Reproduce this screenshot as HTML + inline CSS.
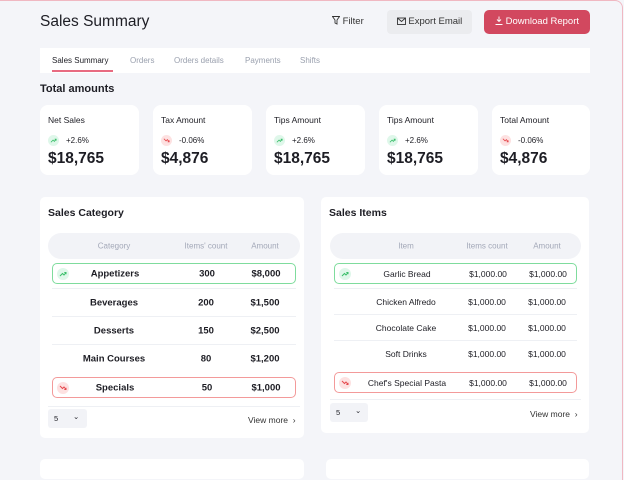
<!DOCTYPE html>
<html><head><style>
*{box-sizing:border-box;margin:0;padding:0}
body{width:624px;height:465px;overflow:hidden;background:#f4f5f9;font-family:"Liberation Sans",sans-serif;color:#1d1d24}
.frame{position:absolute;left:0;top:0;width:623px;height:480px;background:#f4f5f9;border-top:1px solid #f0b8c2;border-right:1px solid #f0b8c2;border-top-right-radius:8px}
.a{position:absolute}
.card{position:absolute;background:#fff;border-radius:8px}
.lbl{font-size:8.5px;position:absolute;left:8px;top:10px}
.badge{position:absolute;left:8px;top:30px;width:11px;height:11px;border-radius:50%}
.g{background:#dff7ea}.r{background:#fde1e1}
.badge svg,.ic svg{position:absolute;left:2px;top:2px}
.pct{position:absolute;left:26px;top:31px;font-size:8px}
.val{position:absolute;left:8px;top:45px;font-size:15.5px;font-weight:bold}
.hdr{position:absolute;height:26px;background:#f2f3f7;border-radius:13px;font-size:8px;color:#a3a8b8}
.hdr span,.row span{position:absolute;top:50%;transform:translate(-50%,-50%);white-space:nowrap}
.row{position:absolute;height:21px;font-size:8.5px}
.row.bl{font-weight:bold;font-size:9.5px}
.gb{border:1px solid #7fdc9d;border-radius:5px}
.rb{border:1px solid #f39a9a;border-radius:5px}
.sep{position:absolute;height:1px;background:#eef0f4}
.ic{position:absolute;left:4px;top:50%;transform:translateY(-50%);width:12px;height:12px;border-radius:50%}
.sel{position:absolute;background:#f2f3f7;border-radius:3px;font-size:7.5px}
.vm{position:absolute;font-size:8.5px;color:#333}
</style></head><body><div class="frame"></div>
<div class="a" style="left:40px;top:13px;font-size:15.5px">Sales Summary</div>
<div class="a" style="left:332px;top:16px;font-size:9.5px;color:#333"><svg width="8" height="9" viewBox="0 0 8 9" style="vertical-align:-1px"><path d="M0.5 0.5h7L5 4v4L3 7V4z" fill="none" stroke="#333" stroke-width="0.9"/></svg> Filter</div>
<div class="a" style="left:387px;top:10px;width:85px;height:24px;background:#ebecef;border-radius:4px;font-size:9.5px;color:#333;text-align:center;line-height:24px"><svg width="9" height="8" viewBox="0 0 9 8" style="vertical-align:-1px"><rect x="0.5" y="1" width="8" height="6.5" fill="none" stroke="#333" stroke-width="0.9"/><path d="M0.5 1L4.5 4.5L8.5 1" fill="none" stroke="#333" stroke-width="0.9"/></svg> Export Email</div>
<div class="a" style="left:484px;top:10px;width:106px;height:24px;background:#d2485f;border-radius:5px;font-size:9.5px;color:#fff;text-align:center;line-height:24px"><svg width="8" height="9" viewBox="0 0 8 9" style="vertical-align:-1px"><path d="M4 0.5v5M2 3.5l2 2 2-2M0.5 8.5h7" fill="none" stroke="#fff" stroke-width="0.9"/></svg> Download Report</div>
<div class="a" style="left:40px;top:48px;width:550px;height:25px;background:#fff;font-size:8px;color:#9aa0ae">
<span class="a" style="left:12px;top:8px;color:#1d1d24">Sales Summary</span>
<span class="a" style="left:12px;top:22px;width:61px;height:2px;background:#e86b81"></span>
<span class="a" style="left:90px;top:8px">Orders</span>
<span class="a" style="left:134px;top:8px">Orders details</span>
<span class="a" style="left:205px;top:8px">Payments</span>
<span class="a" style="left:260px;top:8px">Shifts</span></div>
<div class="a" style="left:40px;top:83px;font-size:11px;font-weight:bold">Total amounts</div>

<svg width="0" height="0" style="position:absolute"><defs>
<symbol id="up" viewBox="0 0 8 8"><path d="M1 6L3.5 3.5L5 5L7 2.5M5.3 2.5H7V4.2" fill="none" stroke="#3bbf6a" stroke-width="1"/></symbol>
<symbol id="dn" viewBox="0 0 8 8"><path d="M1 2L3.5 4.5L5 3L7 5.5M5.3 5.5H7V3.8" fill="none" stroke="#e5484d" stroke-width="1"/></symbol>
</defs></svg>

<div class="card" style="left:40px;top:105px;width:99px;height:70px"><div class="lbl">Net Sales</div><div class="badge g"><svg width="7" height="7"><use href="#up"/></svg></div><div class="pct">+2.6%</div><div class="val">$18,765</div></div>
<div class="card" style="left:153px;top:105px;width:99px;height:70px"><div class="lbl">Tax Amount</div><div class="badge r"><svg width="7" height="7"><use href="#dn"/></svg></div><div class="pct">-0.06%</div><div class="val">$4,876</div></div>
<div class="card" style="left:266px;top:105px;width:99px;height:70px"><div class="lbl">Tips Amount</div><div class="badge g"><svg width="7" height="7"><use href="#up"/></svg></div><div class="pct">+2.6%</div><div class="val">$18,765</div></div>
<div class="card" style="left:379px;top:105px;width:99px;height:70px"><div class="lbl">Tips Amount</div><div class="badge g"><svg width="7" height="7"><use href="#up"/></svg></div><div class="pct">+2.6%</div><div class="val">$18,765</div></div>
<div class="card" style="left:492px;top:105px;width:98px;height:70px"><div class="lbl">Total Amount</div><div class="badge r"><svg width="7" height="7"><use href="#dn"/></svg></div><div class="pct">-0.06%</div><div class="val">$4,876</div></div>

<div class="card" style="left:40px;top:197px;width:264px;height:241px;border-radius:5px">
<div class="a" style="left:8px;top:10px;font-size:10.5px;font-weight:bold">Sales Category</div>
<div class="hdr" style="left:8px;top:36px;width:252px"><span style="left:66px">Category</span><span style="left:158px">Items' count</span><span style="left:217px">Amount</span></div>
<div class="row bl gb" style="left:12px;top:66px;width:244px"><div class="ic g"><svg width="8" height="8"><use href="#up"/></svg></div><span style="left:62px">Appetizers</span><span style="left:154px">300</span><span style="left:213px">$8,000</span></div>
<div class="sep" style="left:12px;top:91px;width:244px"></div>
<div class="row bl" style="left:12px;top:95px;width:244px"><span style="left:62px">Beverages</span><span style="left:154px">200</span><span style="left:213px">$1,500</span></div>
<div class="sep" style="left:12px;top:119px;width:244px"></div>
<div class="row bl" style="left:12px;top:123px;width:244px"><span style="left:62px">Desserts</span><span style="left:154px">150</span><span style="left:213px">$2,500</span></div>
<div class="sep" style="left:12px;top:147px;width:244px"></div>
<div class="row bl" style="left:12px;top:151px;width:244px"><span style="left:62px">Main Courses</span><span style="left:154px">80</span><span style="left:213px">$1,200</span></div>
<div class="row bl rb" style="left:12px;top:180px;width:244px"><div class="ic r"><svg width="8" height="8"><use href="#dn"/></svg></div><span style="left:62px">Specials</span><span style="left:154px">50</span><span style="left:213px">$1,000</span></div>
<div class="sep" style="left:8px;top:209px;width:252px"></div>
<div class="sel" style="left:8px;top:212px;width:39px;height:19px"><span class="a" style="left:6px;top:5px">5</span><span class="a" style="left:25px;top:3px">⌄</span></div>
<div class="vm" style="left:208px;top:218px">View more &nbsp;›</div>
</div>

<div class="card" style="left:321px;top:197px;width:268px;height:236px;border-radius:5px">
<div class="a" style="left:8px;top:10px;font-size:10.5px;font-weight:bold">Sales Items</div>
<div class="hdr" style="left:9px;top:36px;width:251px"><span style="left:76px">Item</span><span style="left:157px">Items count</span><span style="left:217px">Amount</span></div>
<div class="row gb" style="left:13px;top:66px;width:243px"><div class="ic g"><svg width="8" height="8"><use href="#up"/></svg></div><span style="left:72px">Garlic Bread</span><span style="left:153px">$1,000.00</span><span style="left:213px">$1,000.00</span></div>
<div class="sep" style="left:13px;top:91px;width:243px"></div>
<div class="row" style="left:13px;top:94px;width:243px"><span style="left:72px">Chicken Alfredo</span><span style="left:153px">$1,000.00</span><span style="left:213px">$1,000.00</span></div>
<div class="sep" style="left:13px;top:117px;width:243px"></div>
<div class="row" style="left:13px;top:120px;width:243px"><span style="left:72px">Chocolate Cake</span><span style="left:153px">$1,000.00</span><span style="left:213px">$1,000.00</span></div>
<div class="sep" style="left:13px;top:143px;width:243px"></div>
<div class="row" style="left:13px;top:146px;width:243px"><span style="left:72px">Soft Drinks</span><span style="left:153px">$1,000.00</span><span style="left:213px">$1,000.00</span></div>
<div class="row rb" style="left:13px;top:175px;width:243px"><div class="ic r"><svg width="8" height="8"><use href="#dn"/></svg></div><span style="left:72px">Chef's Special Pasta</span><span style="left:153px">$1,000.00</span><span style="left:213px">$1,000.00</span></div>
<div class="sep" style="left:9px;top:202px;width:251px"></div>
<div class="sel" style="left:9px;top:206px;width:38px;height:19px"><span class="a" style="left:6px;top:5px">5</span><span class="a" style="left:25px;top:3px">⌄</span></div>
<div class="vm" style="left:209px;top:212px">View more &nbsp;›</div>
</div>

<div class="card" style="left:40px;top:459px;width:264px;height:20px;border-radius:5px"></div>
<div class="card" style="left:326px;top:459px;width:263px;height:20px;border-radius:5px"></div>
</body></html>
